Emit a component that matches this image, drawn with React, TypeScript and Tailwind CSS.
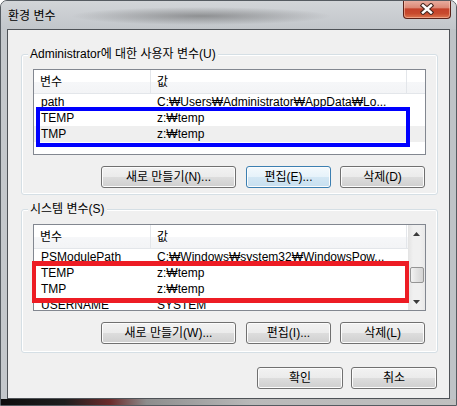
import React from "react";

const btnBase =
  "flex h-[22px] items-center justify-center rounded-[3px] border text-[12px] text-black shadow-[inset_0_0_0_1px_#fcfcfc]";
const btnNormal =
  "border-[#707070] bg-[linear-gradient(#f2f2f2_0%,#ebebeb_49%,#dddddd_50%,#cfcfcf_100%)]";
const btnDefault =
  "border-[#3c7fb1] bg-[linear-gradient(#f3f9fd_0%,#e6f2fa_49%,#d3e7f4_50%,#c7dfef_100%)] shadow-[inset_0_0_0_1px_#c5e9fb]";

function Btn({ label, className, primary }: { label: string; className: string; primary?: boolean }) {
  return <div className={`${btnBase} ${primary ? btnDefault : btnNormal} ${className}`}>{label}</div>;
}

function Row({ name, value, gray }: { name: string; value: string; gray?: boolean }) {
  return (
    <div className={`flex h-[16px] shrink-0 items-center whitespace-nowrap ${gray ? "bg-[#efefef]" : "bg-white"}`}>
      <div className="w-[117px] shrink-0 overflow-hidden pl-[7px]">{name}</div>
      <div className="w-[256px] shrink-0 overflow-hidden pl-[6px]">{value}</div>
    </div>
  );
}

function Header({ extra }: { extra: boolean }) {
  return (
    <div className="flex h-[24px] shrink-0 border-b border-[#e3e6ea] bg-[linear-gradient(#ffffff_0%,#ffffff_50%,#f6f7f9_51%,#f3f4f6_100%)]">
      <div className="flex w-[117px] shrink-0 items-center border-r border-[#e3e6ea] pl-[6px]">변수</div>
      <div className="flex w-[256px] shrink-0 items-center border-r border-[#e3e6ea] pl-[6px]">값</div>
      {extra && <div className="flex-1" />}
    </div>
  );
}

function GroupBox({ label, className, children }: { label: string; className: string; children: React.ReactNode }) {
  return (
    <div
      className={`relative mr-[11px] ml-[13px] flex flex-col rounded-[3px] border border-[#d5dfe5] shadow-[inset_0_0_0_1px_#ffffff] ${className}`}
    >
      <span className="absolute -top-[8px] left-[6px] bg-[#f0f0f0] px-[2px] leading-[14px]">{label}</span>
      {children}
    </div>
  );
}

export default function App() {
  return (
    <div className="h-[406px] w-[457px] overflow-hidden bg-white font-['Liberation_Sans','Noto_Sans_CJK_KR',sans-serif] text-[12px] text-black">
      <div className="flex h-full w-full flex-col overflow-hidden rounded-t-[7px] border border-[#555b61] bg-[linear-gradient(90deg,#c4c8cc_0%,#bfc3c7_100%)]">
        {/* title bar */}
        <div className="flex h-[28px] shrink-0 items-start bg-[radial-gradient(ellipse_130px_9px_at_200px_15px,rgba(70,70,70,0.45),rgba(70,70,70,0)),linear-gradient(#d2d5d8,#c2c6ca)]">
          <span className="mt-[8px] ml-[7px] leading-[14px]">환경 변수</span>
          <div className="mr-[5px] ml-auto flex h-[19px] w-[48px] -mt-px items-center justify-center rounded-b-[4px] border border-t-0 border-[#5b2219] bg-[linear-gradient(#e9b1a4_0%,#dc8a77_42%,#c4412a_50%,#c84a2d_75%,#dc7650_100%)] shadow-[inset_0_0_0_1px_rgba(255,210,190,0.5)]">
            <svg width="14" height="12" viewBox="0 0 14 12">
              <path d="M3 2.5 L11 9.5 M11 2.5 L3 9.5" stroke="#4a2a22" strokeWidth="4.6" strokeLinecap="square" />
              <path d="M3 2.5 L11 9.5 M11 2.5 L3 9.5" stroke="#ffffff" strokeWidth="2.4" strokeLinecap="square" />
            </svg>
          </div>
        </div>

        {/* client area */}
        <div className="mx-[6px] flex h-[370px] shrink-0 flex-col border border-[#4e5257] bg-[#f0f0f0]">
          <GroupBox label="Administrator에 대한 사용자 변수(U)" className="mt-[24px] h-[141px]">
            <div className="relative mt-[14px] ml-[11px] h-[86px] w-[393px] shrink-0">
              <div className="flex h-full flex-col overflow-hidden border border-[#828790] bg-white">
                <Header extra />
                <Row name="path" value="C:₩Users₩Administrator₩AppData₩Lo..." />
                <Row name="TEMP" value="z:₩temp" />
                <Row name="TMP" value="z:₩temp" gray />
              </div>
              <div className="absolute top-[38px] left-[3px] h-[40px] w-[374px] border-[4px] border-[#0000ff]" />
            </div>
            <div className="mt-[11px] flex justify-end pr-[12px]">
              <Btn label="새로 만들기(N)..." className="w-[135px]" />
              <Btn label="편집(E)..." className="ml-[10px] w-[85px]" primary />
              <Btn label="삭제(D)" className="ml-[9px] w-[85px]" />
            </div>
          </GroupBox>

          <GroupBox label="시스템 변수(S)" className="mt-[14px] h-[144px]">
            <div className="relative mt-[14px] ml-[11px] h-[87px] w-[393px] shrink-0">
              <div className="flex h-full overflow-hidden border border-[#828790] bg-white">
                <div className="flex min-w-0 flex-1 flex-col overflow-hidden">
                  <Header extra={false} />
                  <Row name="PSModulePath" value="C:₩Windows₩system32₩WindowsPow..." />
                  <Row name="TEMP" value="z:₩temp" />
                  <Row name="TMP" value="z:₩temp" />
                  <Row name="USERNAME" value="SYSTEM" />
                </div>
                {/* scrollbar */}
                <div className="flex w-[17px] shrink-0 flex-col bg-[linear-gradient(90deg,#e3e3e3,#f0f0f0_30%,#f0f0f0_70%,#e8e8e8)]">
                  <div className="flex h-[17px] items-center justify-center">
                    <svg width="7" height="4" viewBox="0 0 7 4">
                      <path d="M3.5 0 L7 4 L0 4 Z" fill="#3b3b3b" />
                    </svg>
                  </div>
                  <div className="mt-[25px] mr-[1px] ml-[2px] h-[16px] rounded-[2px] border border-[#959595] bg-[linear-gradient(90deg,#f2f2f2,#e2e2e2_50%,#d4d4d4)]" />
                  <div className="mt-auto flex h-[17px] items-center justify-center">
                    <svg width="7" height="4" viewBox="0 0 7 4">
                      <path d="M0 0 L7 0 L3.5 4 Z" fill="#3b3b3b" />
                    </svg>
                  </div>
                </div>
              </div>
              <div className="absolute top-[37px] -left-[1px] h-[42px] w-[377px] border-x-[4px] border-y-[5px] border-[#ed1c24]" />
            </div>
            <div className="mt-[11px] flex justify-end pr-[12px]">
              <Btn label="새로 만들기(W)..." className="w-[135px]" />
              <Btn label="편집(I)..." className="ml-[10px] w-[85px]" />
              <Btn label="삭제(L)" className="ml-[9px] w-[85px]" />
            </div>
          </GroupBox>

          <div className="mt-[14px] flex justify-end pr-[12px]">
            <Btn label="확인" className="w-[86px]" />
            <Btn label="취소" className="ml-[8px] w-[86px]" />
          </div>
        </div>

        {/* bottom frame */}
        <div className="flex-1 bg-[linear-gradient(90deg,#0d0d0d_0%,#1e1e1e_14%,#6b2b2b_24%,#8d8d8d_32%,#b9b9b9_55%,#c0c0c0_100%)]" />
      </div>
    </div>
  );
}
